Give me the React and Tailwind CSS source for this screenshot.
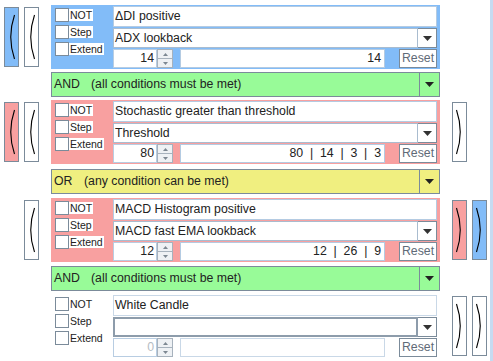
import React from 'react';

const Paren = ({ side, bg }) => (
  <div className={`w-[15px] h-[60px] border border-[#7b8b9a] ${bg}`}>
    <svg width="13" height="58" viewBox="0 0 13 58" className="block">
      {side === 'left' ? (
        <path d="M9.5 7 Q2 29 9.5 51" fill="none" stroke="#000" strokeWidth="1.1" />
      ) : (
        <path d="M3.5 7 Q11 29 3.5 51" fill="none" stroke="#000" strokeWidth="1.1" />
      )}
    </svg>
  </div>
);

const Slot = () => <div className="w-[15px] h-[60px]" />;

const DownArrow = ({ w = 9, h = 5, color = '#222' }) => (
  <svg width={w} height={h} viewBox={`0 0 ${w} ${h}`} className="block">
    <polygon points={`0,0 ${w},0 ${w / 2},${h}`} fill={color} />
  </svg>
);

const Check = ({ label }) => (
  <div className="flex items-center h-[14px]">
    <div className="w-[14px] h-[14px] border border-[#7b8b9a] bg-white" />
    <span className="bg-white text-[10.5px] leading-[12px] pl-[1px] pr-[1px] text-[#222]">{label}</span>
  </div>
);

const Spinner = ({ value, disabled }) => (
  <div className="flex w-[60px] h-full">
    <div
      className={`flex-1 border border-[#b8cde2] bg-white text-right pr-[2px] leading-[17px] ${
        disabled ? 'text-[#b4bcc4]' : 'text-[#222]'
      }`}
    >
      {value}
    </div>
    <div className="w-[16px] flex flex-col">
      <div className="flex-1 border border-[#a7b2bd] bg-[#eef1f4] flex items-center justify-center">
        <svg width="5" height="3" viewBox="0 0 5 3" className="block">
          <polygon points="0,3 5,3 2.5,0" fill="#7d8892" />
        </svg>
      </div>
      <div className="flex-1 border border-t-0 border-[#a7b2bd] bg-[#eef1f4] flex items-center justify-center">
        <svg width="5" height="3" viewBox="0 0 5 3" className="block">
          <polygon points="0,0 5,0 2.5,3" fill="#7d8892" />
        </svg>
      </div>
    </div>
  </div>
);

const Panel = ({ bg, title, combo, spin, params, disabled }) => (
  <div className={`w-[389px] h-[64px] flex ${bg}`}>
    <div className="w-[62px] pl-[4px] pt-[3px] flex flex-col gap-[3px]">
      <Check label="NOT" />
      <Check label="Step" />
      <Check label="Extend" />
    </div>
    <div className="w-[324px] pt-[1px] flex flex-col">
      <div
        className={`h-[21px] border ${
          disabled ? 'border-[#c9d8e7]' : 'border-[#b4cbe2]'
        } bg-white pl-[1px] leading-[19px] text-[#222]`}
      >
        {title}
      </div>
      <div className="h-[20px] mt-[1px] flex">
        <div
          className={`flex-1 bg-white pl-[1px] text-[#222] ${
            disabled ? 'border-2 border-[#8d9cab] leading-[16px]' : 'border border-[#a9bccf] leading-[18px]'
          }`}
        >
          {combo}
        </div>
        <div className="w-[19px] border border-l-0 border-[#7b8b9a] bg-white flex items-center justify-center">
          <DownArrow w={9} h={5} color="#333" />
        </div>
      </div>
      <div className="h-[19px] mt-[1px] flex">
        <Spinner value={spin} disabled={disabled} />
        <div
          className={`ml-[7px] w-[205px] h-full border ${
            disabled ? 'border-[#c9d8e7]' : 'border-[#b4cbe2]'
          } bg-white text-right pr-[3px] leading-[17px] text-[#222] whitespace-pre`}
        >
          {params}
        </div>
        <div className="ml-[14px] w-[38px] h-full border border-[#7b8b9a] bg-white text-[#5f6b78] text-center leading-[17px]">
          Reset
        </div>
      </div>
    </div>
  </div>
);

const Logic = ({ bg, op, opWidth, text }) => (
  <div className={`ml-[51px] w-[389px] h-[25px] border border-[#7b8b9a] flex ${bg}`}>
    <div className="flex-1 flex items-center pl-[2px] text-[#222]">
      <span className={opWidth}>{op}</span>
      <span>{text}</span>
    </div>
    <div className="w-[20px] border-l border-[#7b8b9a] flex items-center justify-center">
      <DownArrow w={9} h={5} color="#222" />
    </div>
  </div>
);

const Row = ({ left, right, children }) => (
  <div className="flex items-start">
    <div className="w-[51px] flex gap-[5px] pl-[4px] pt-[2px]">{left}</div>
    {children}
    <div className="flex gap-[5px] pl-[12px] pt-[2px]">{right}</div>
  </div>
);

export default function App() {
  return (
    <div className="w-[493px] h-[361px] bg-white flex overflow-hidden font-['Liberation_Sans',Arial,sans-serif] text-[12.3px]">
      <div className="w-[490px] pt-[5px] flex flex-col">
        <Row
          left={[<Paren key="a" side="left" bg="bg-[#82bcf8]" />, <Paren key="b" side="left" bg="bg-white" />]}
        >
          <Panel bg="bg-[#82bcf8]" title="ΔDI positive" combo="ADX lookback" spin="14" params="14" />
        </Row>

        <div className="mt-[3px]">
          <Logic bg="bg-[#98fb98]" op="AND" opWidth="w-[37px]" text="(all conditions must be met)" />
        </div>

        <div className="mt-[3px]">
          <Row
            left={[<Paren key="a" side="left" bg="bg-[#f8a0a0]" />, <Paren key="b" side="left" bg="bg-white" />]}
            right={[<Paren key="c" side="right" bg="bg-white" />]}
          >
            <Panel
              bg="bg-[#f8a0a0]"
              title="Stochastic greater than threshold"
              combo="Threshold"
              spin="80"
              params="80  |  14  |  3  |  3"
            />
          </Row>
        </div>

        <div className="mt-[5px]">
          <Logic bg="bg-[#f0ef80]" op="OR" opWidth="w-[30px]" text="(any condition can be met)" />
        </div>

        <div className="mt-[4px]">
          <Row
            left={[<Slot key="a" />, <Paren key="b" side="left" bg="bg-white" />]}
            right={[<Paren key="c" side="right" bg="bg-[#f8a0a0]" />, <Paren key="d" side="right" bg="bg-[#82bcf8]" />]}
          >
            <Panel
              bg="bg-[#f8a0a0]"
              title="MACD Histogram positive"
              combo="MACD fast EMA lookback"
              spin="12"
              params="12  |  26  |  9"
            />
          </Row>
        </div>

        <div className="mt-[4px]">
          <Logic bg="bg-[#98fb98]" op="AND" opWidth="w-[37px]" text="(all conditions must be met)" />
        </div>

        <div className="mt-[3px]">
          <Row
            left={[<Slot key="a" />, <Slot key="b" />]}
            right={[<Paren key="c" side="right" bg="bg-white" />, <Paren key="d" side="right" bg="bg-white" />]}
          >
            <Panel bg="bg-white" title="White Candle" combo="" spin="0" params="" disabled />
          </Row>
        </div>
      </div>
      <div className="w-[3px] h-full bg-[#c6dbf1]" />
    </div>
  );
}
